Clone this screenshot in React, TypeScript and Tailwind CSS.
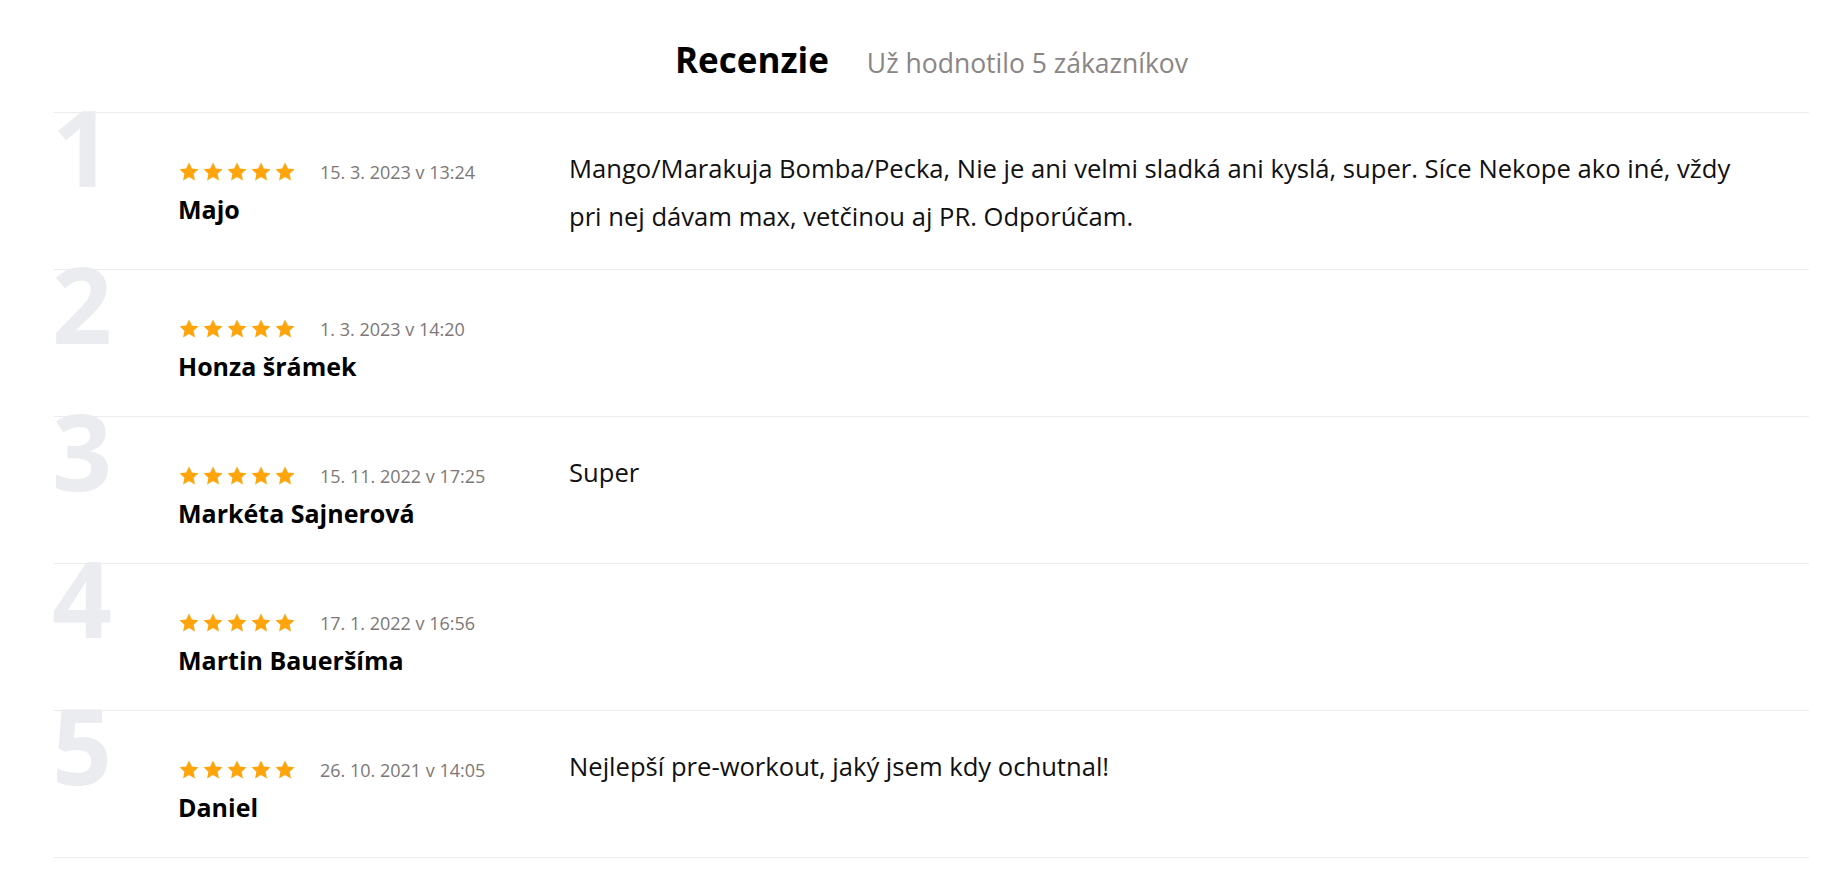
import React from 'react';

type Review = {
  rating: number;
  date: string;
  name: string;
  text?: string;
};

const reviews: Review[] = [
  {
    rating: 5,
    date: '15. 3. 2023 v 13:24',
    name: 'Majo',
    text: 'Mango/Marakuja Bomba/Pecka, Nie je ani velmi sladká ani kyslá, super. Síce Nekope ako iné, vždy pri nej dávam max, vetčinou aj PR. Odporúčam.',
  },
  { rating: 5, date: '1. 3. 2023 v 14:20', name: 'Honza šrámek' },
  { rating: 5, date: '15. 11. 2022 v 17:25', name: 'Markéta Sajnerová', text: 'Super' },
  { rating: 5, date: '17. 1. 2022 v 16:56', name: 'Martin Baueršíma' },
  {
    rating: 5,
    date: '26. 10. 2021 v 14:05',
    name: 'Daniel',
    text: 'Nejlepší pre-workout, jaký jsem kdy ochutnal!',
  },
];

function StarIcon() {
  return (
    <svg viewBox="0 0 24 24" className="w-[22px] h-[22px]" fill="#ffa40a">
      <polygon points="12,1.5 15.1,8.1 22.4,8.9 17,13.9 18.5,21.2 12,17.5 5.5,21.2 7,13.9 1.6,8.9 8.9,8.1" />
    </svg>
  );
}

function ReviewRow({ review, index }: { review: Review; index: number }) {
  return (
    <div className="flex border-t border-[#ececec] min-h-[147px]">
      {/* big index number, cap top sits on the divider */}
      <div className="w-[124px] shrink-0">
        <div className="text-[105px] leading-[0.652] font-bold text-[#ebecf0] -ml-[2px] select-none">
          {index + 1}
        </div>
      </div>

      <div className="w-[391px] shrink-0 pt-[37px] pb-[27px]">
        <div className="flex items-center h-[44px]">
          <div className="flex gap-[2px]">
            {Array.from({ length: review.rating }).map((_, i) => (
              <StarIcon key={i} />
            ))}
          </div>
          <span className="ml-[24px] text-[18px] text-[#7d7777]">{review.date}</span>
        </div>
        <div className="text-[25px] leading-[30px] font-bold text-black">{review.name}</div>
      </div>

      <div className="flex-1 pt-[32px] pb-[28px] pr-[40px] text-[25.6px] leading-[48px] text-[#111]">
        {review.text}
      </div>
    </div>
  );
}

export default function App() {
  return (
    <div className="w-full bg-white font-['Open_Sans',sans-serif]">
      <div className="ml-[54px] w-[1755px]">
        <div className="h-[112px] pt-[42px] flex items-baseline justify-center gap-[38px]">
          <h2 className="text-[35px] leading-none font-bold text-black">Recenzie</h2>
          <span className="text-[26.5px] leading-none text-[#8a8585]">Už hodnotilo 5 zákazníkov</span>
        </div>
        <div className="border-b border-[#ececec]">
          {reviews.map((r, i) => (
            <ReviewRow key={i} review={r} index={i} />
          ))}
        </div>
      </div>
    </div>
  );
}
